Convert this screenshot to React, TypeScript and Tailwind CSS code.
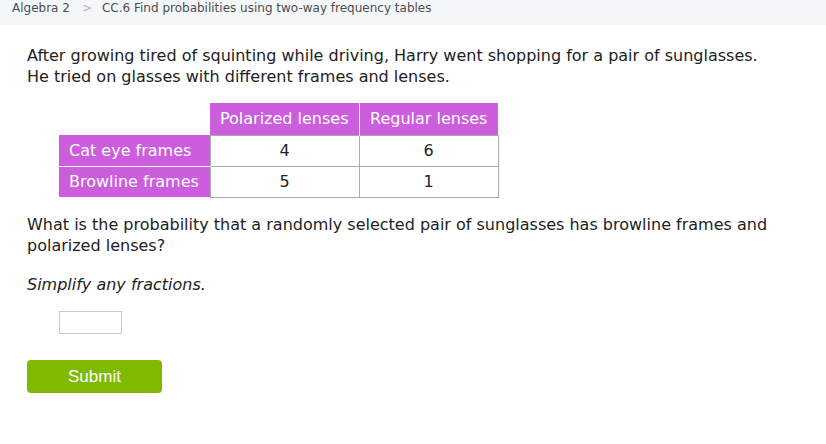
export default function App() {
  const font = { fontFamily: '"DejaVu Sans", Verdana, sans-serif' };
  return (
    <div className="w-[826px] h-[444px] bg-white text-[#333]" style={font}>
      <div className="h-[25px] bg-[#f3f7fa] flex items-start pl-[12px] pt-[1px] leading-[14px] text-[12px] text-[#4d4d4d]">
        <span>Algebra 2</span>
        <span className="ml-[12px] mr-[10px] text-[#b3b3b3] text-[12px]">&gt;</span>
        <span>CC.6 Find probabilities using two-way frequency tables</span>
      </div>
      <div className="pl-[27px] pt-[20px] text-[16px] leading-[21px] text-[#222]">
        <p>
          After growing tired of squinting while driving, Harry went shopping for a pair of sunglasses.
          <br />
          He tried on glasses with different frames and lenses.
        </p>
        <table className="ml-[32px] mt-[16px] border-collapse text-[16px]">
          <tbody>
            <tr className="h-[32px]">
              <td className="w-[151px]"></td>
              <td className="w-[149px] bg-[#cc5ddd] text-white text-center border-r border-white">Polarized lenses</td>
              <td className="w-[139px] bg-[#cc5ddd] text-white text-center">Regular lenses</td>
            </tr>
            <tr className="h-[31px]">
              <td className="bg-[#cc5ddd] text-white pl-[10px] border-b border-white">Cat eye frames</td>
              <td className="text-center border border-[#aaa]">4</td>
              <td className="text-center border border-[#aaa]">6</td>
            </tr>
            <tr className="h-[31px]">
              <td className="bg-[#cc5ddd] text-white pl-[10px]">Browline frames</td>
              <td className="text-center border border-[#aaa]">5</td>
              <td className="text-center border border-[#aaa]">1</td>
            </tr>
          </tbody>
        </table>
        <p className="mt-[16px]">
          What is the probability that a randomly selected pair of sunglasses has browline frames and
          <br />
          polarized lenses?
        </p>
        <p className="mt-[18px] italic">Simplify any fractions.</p>
        <div className="ml-[32px] mt-[16px] w-[63px] h-[23px] border border-[#c8c8c8]"></div>
        <button
          type="button"
          className="mt-[26px] w-[135px] h-[33px] rounded-[4px] bg-[#7fba00] text-white text-[17px]"
          style={{ fontFamily: '"Liberation Sans", Arial, sans-serif' }}
        >
          Submit
        </button>
      </div>
    </div>
  );
}
